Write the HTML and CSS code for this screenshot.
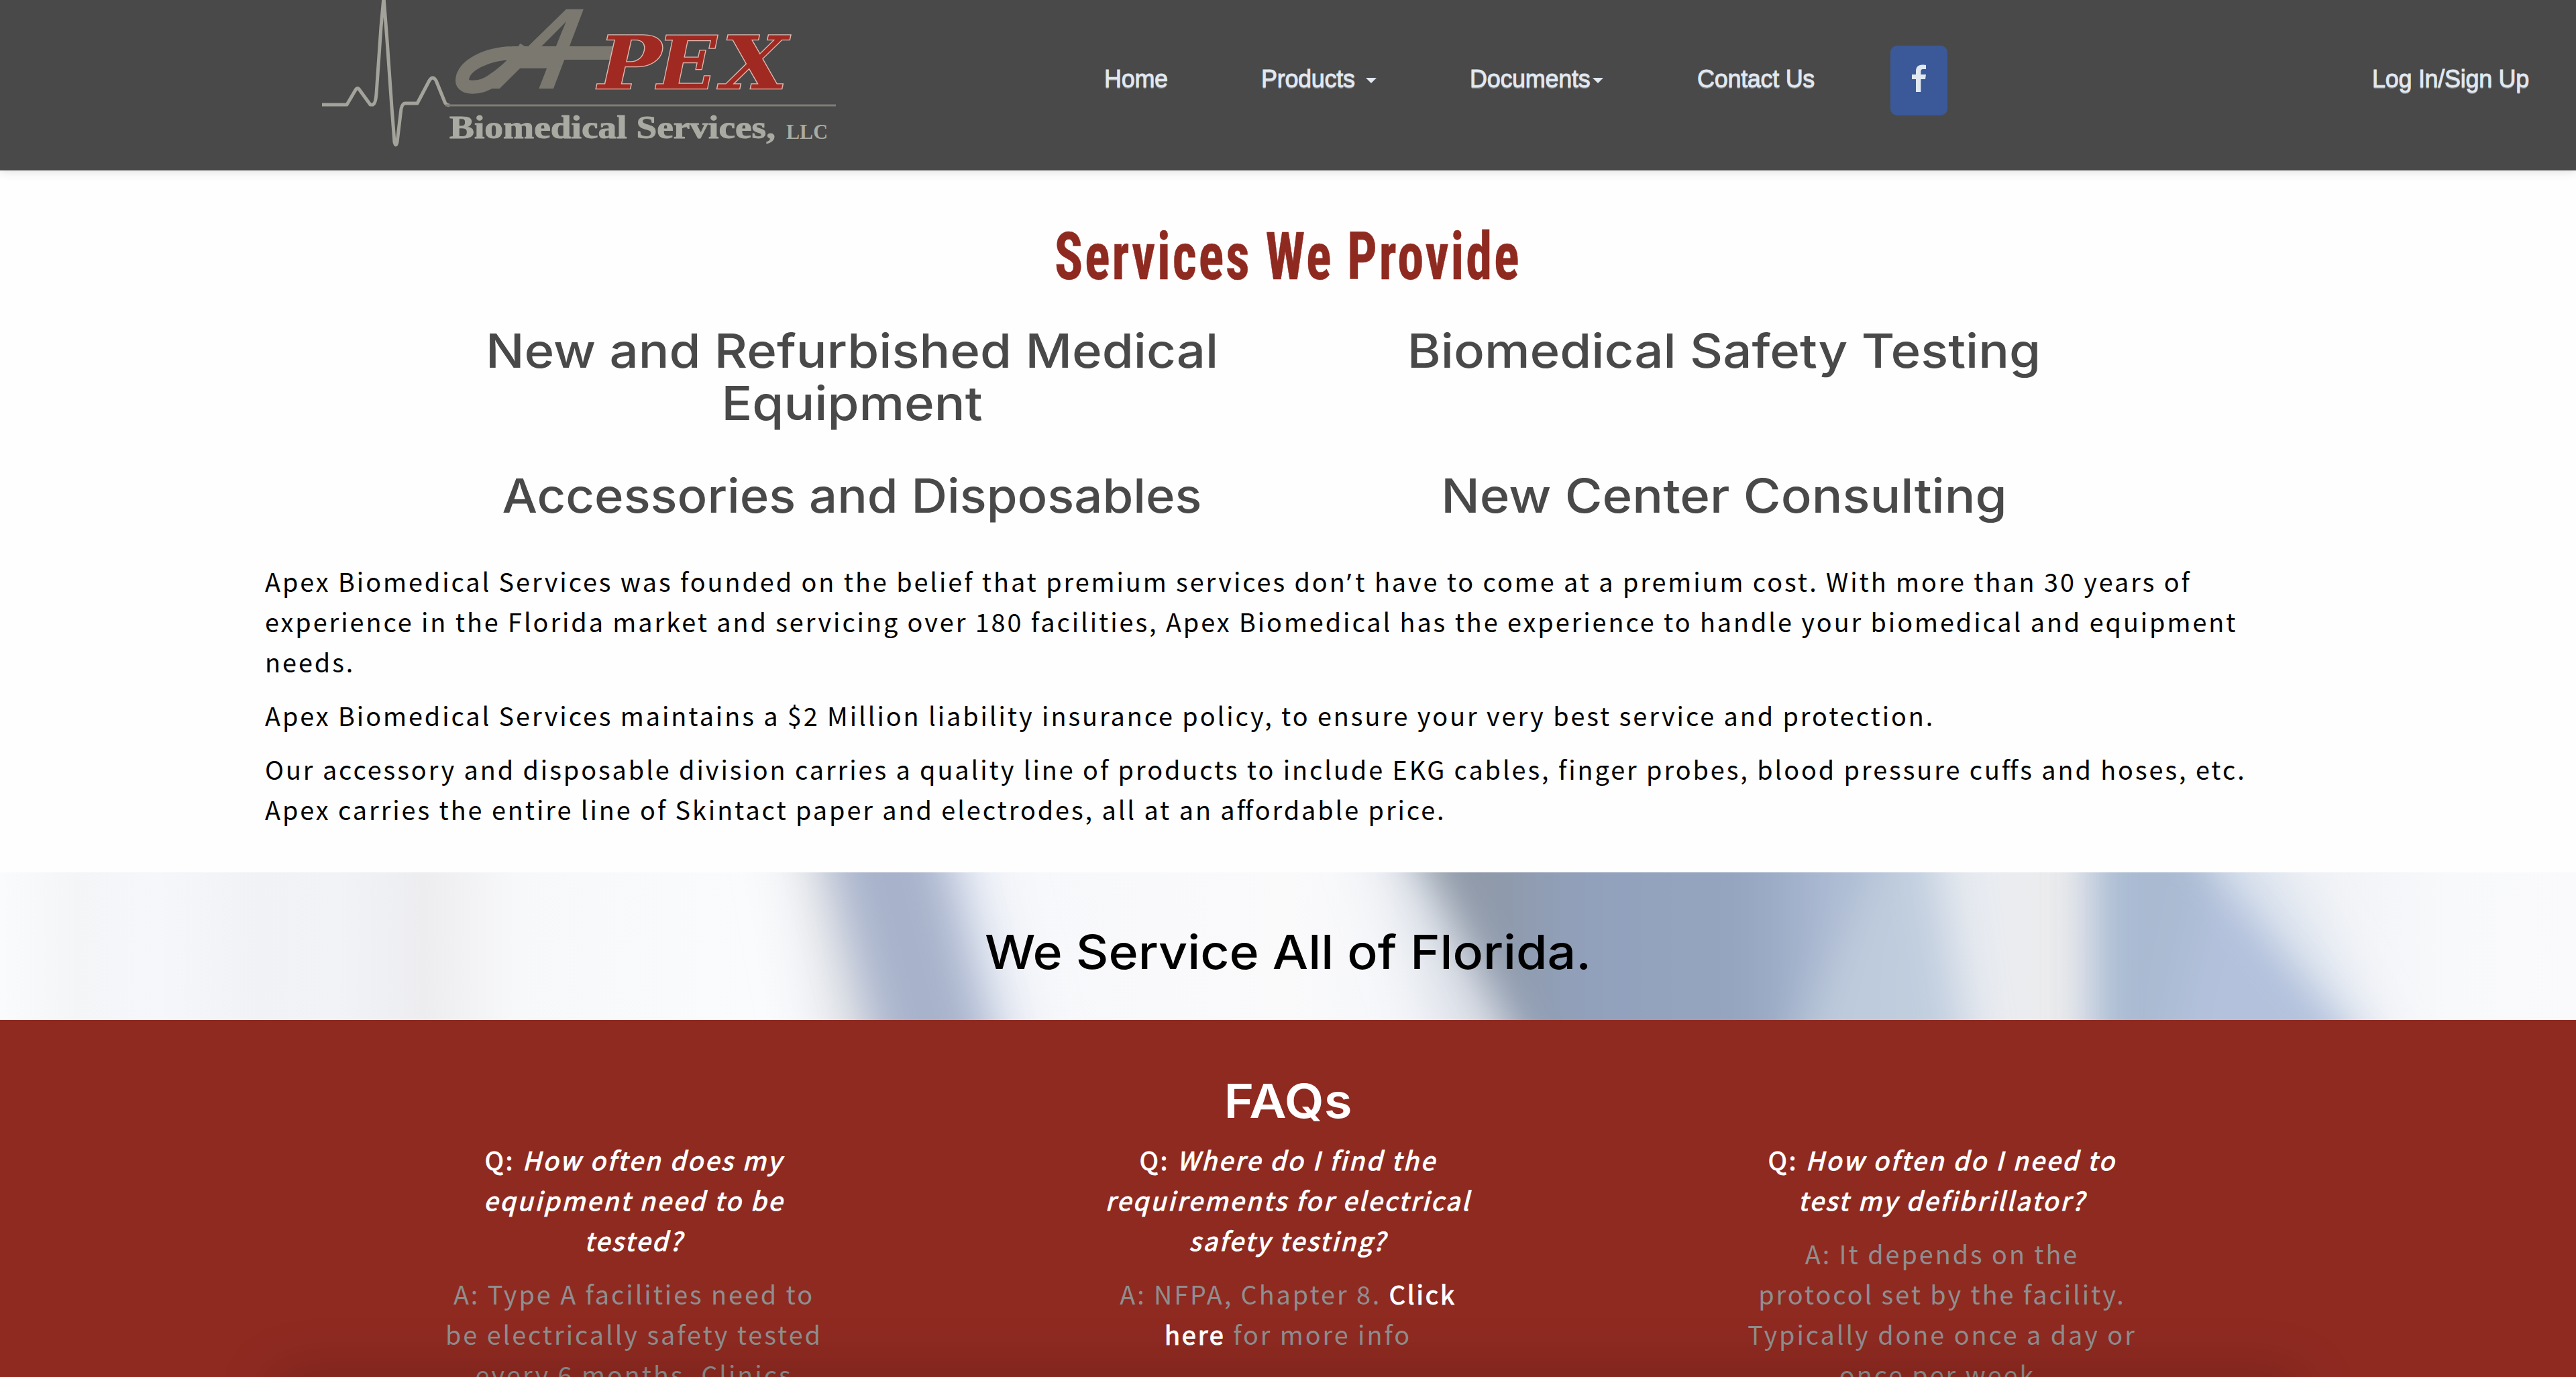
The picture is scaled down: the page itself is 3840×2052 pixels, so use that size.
FILE: index.html
```html
<!DOCTYPE html>
<html lang="en">
<head>
<meta charset="utf-8">
<title>Apex Biomedical Services, LLC</title>
<link rel="stylesheet" href="styles.css">
</head>
<body>
<header class="header">
  <a class="logo" href="#">
    <svg width="770" height="254" viewBox="480 0 770 254" role="img" aria-label="Apex Biomedical Services, LLC">
      <path class="pulse" d="M480 156H517L530 134Q533 129 536 134L552 156H556Q560 154 561 140L568 40L572 -4L577 60L584 160L588 212Q590 220 592 212L598 162Q600 154 604 154H622L640 120Q645 112 650 120L663 152Q664 156 670 157"/>
      <path class="rule" d="M664 157H1246"/>
      <path class="swash" d="M930 79H768C725 79 689 98 689 120C689 133 716 133 734 120C752 108 770 93 784 70"/>
      <text class="logo-a" transform="translate(719 132) skewX(-35)" textLength="110" lengthAdjust="spacingAndGlyphs">A</text>
      <text class="logo-pex" x="892" y="132" textLength="94" lengthAdjust="spacingAndGlyphs">P</text>
      <text class="logo-pex" x="980" y="132" textLength="88" lengthAdjust="spacingAndGlyphs">E</text>
      <text class="logo-pex" x="1076" y="132" textLength="98" lengthAdjust="spacingAndGlyphs">X</text>
      <text class="logo-name" x="670" y="206" textLength="486" lengthAdjust="spacingAndGlyphs">Biomedical Services,</text>
      <text class="logo-llc" x="1172" y="207" textLength="62" lengthAdjust="spacingAndGlyphs">LLC</text>
    </svg>
  </a>
  <nav class="nav">
    <a href="#">Home</a>
    <a href="#">Products <span class="caret caret-gap"></span></a>
    <a href="#">Documents<span class="caret"></span></a>
    <a href="#">Contact Us</a>
    <a class="facebook" href="#" aria-label="Facebook">
      <svg width="24" height="42" viewBox="0 0 24 42"><path d="M22 1v6h-4c-3 0-3.600 1.500-3.600 4v4H22l-1 7h-6.600v19H7V22H1v-7h6v-5C7 4 10.500 .5 16.500 .5c2.500 0 4.500 .2 5.500 .5z"/></svg>
    </a>
  </nav>
  <a class="login" href="#">Log In/Sign Up</a>
</header>

<main class="services">
  <h2 class="services-title"><span>Services We Provide</span></h2>
  <div class="service-grid">
    <h3 class="display">New and Refurbished Medical<br>Equipment</h3>
    <h3 class="display">Biomedical Safety Testing</h3>
    <h3 class="display tight">Accessories and Disposables</h3>
    <h3 class="display">New Center Consulting</h3>
  </div>
  <div class="about">
    <p>Apex Biomedical Services was founded on the belief that premium services don<span class="apos">’</span>t have to come at a premium cost. With more than 30 years of<br>experience in the Florida market and servicing over 180 facilities, Apex Biomedical has the experience to handle your biomedical and equipment<br>needs.</p>
    <p>Apex Biomedical Services maintains a $2 Million liability insurance policy, to ensure your very best service and protection.</p>
    <p>Our accessory and disposable division carries a quality line of products to include EKG cables, finger probes, blood pressure cu<span class="lig">f</span>fs and hoses, etc.<br>Apex carries the entire line of Skintact paper and electrodes, all at an a<span class="lig">f</span>fordable price.</p>
  </div>
</main>

<section class="banner">
  <svg class="banner-art" viewBox="0 0 3840 220" preserveAspectRatio="none" aria-hidden="true">
    <defs>
      <linearGradient id="base" x1="0" x2="1" y1="0" y2="0">
        <stop offset="0" stop-color="#fafbfc"/><stop offset=".03" stop-color="#f3f5f7"/>
        <stop offset=".06" stop-color="#f5f7fb"/><stop offset=".1" stop-color="#f1f2f5"/>
        <stop offset=".13" stop-color="#f1f3f7"/><stop offset=".165" stop-color="#ededf0"/>
        <stop offset=".2" stop-color="#f7f8fa"/><stop offset=".29" stop-color="#fafbfd"/>
        <stop offset=".4" stop-color="#f7f8fb"/><stop offset=".5" stop-color="#fafafb"/>
        <stop offset=".56" stop-color="#f3f5f9"/><stop offset=".77" stop-color="#e9ecf1"/>
        <stop offset=".8" stop-color="#ececed"/><stop offset=".9" stop-color="#f0f2f6"/>
        <stop offset=".95" stop-color="#f8f9fb"/><stop offset="1" stop-color="#fafafc"/>
      </linearGradient>
      <linearGradient id="fold" x1="0" x2="1" y1="0" y2="0">
        <stop offset="0" stop-color="#8f99a5"/><stop offset=".14" stop-color="#8f9aab"/>
        <stop offset=".28" stop-color="#91a0bb"/><stop offset=".6" stop-color="#95a5c0"/>
        <stop offset=".74" stop-color="#abb9d2"/><stop offset="1" stop-color="#b9c8de"/>
      </linearGradient>
      <filter id="soft" x="-50%" width="200%" y="0" height="100%"><feGaussianBlur stdDeviation="33 0"/></filter>
      <filter id="softer" x="-50%" width="200%" y="0" height="100%"><feGaussianBlur stdDeviation="46 0"/></filter>
    </defs>
    <rect width="3840" height="220" fill="url(#base)"/>
    <g filter="url(#softer)">
      <path fill="#d9e0ee" d="M1230 0H1455L1510 220H1300z"/>
      <path fill="#dbdee3" d="M1195 0H1300L1350 220H1235z"/>
      <path fill="#d8dde5" d="M2075 0H2250L2350 220H2150z"/>
      <path fill="#d5dfec" d="M3150 0H3390L3520 220H3150z"/>
    </g>
    <g filter="url(#soft)">
      <path fill="#a7b2cb" d="M1245 0H1410L1465 220H1300z"/>
      <path fill="url(#fold)" d="M2130 0H2880L2925 220H2245z"/>
      <path fill="#c6d2e1" d="M2790 0L2900 0L2930 220H2690z" opacity=".65"/>
      <path fill="#a9bad1" d="M3120 0H3300L3480 220H3120z"/>
      <path fill="#b3c1dc" d="M3290 0H3300L3480 220H3240z"/>
    </g>
  </svg>
  <h2 class="display banner-title">We Service All of Florida.</h2>
</section>

<section class="faqs">
  <h2 class="display faqs-title">FAQs</h2>
  <div class="faq-grid">
    <article>
      <p class="question">Q: <em>How often does my<br>equipment need to be<br>tested?</em></p>
      <p class="answer">A: Type A facilities need to<br>be electrically safety tested<br>every 6 months. Clinics</p>
    </article>
    <article>
      <p class="question">Q: <em>Where do I find the<br>requirements for electrical<br>safety testing?</em></p>
      <p class="answer">A: NFPA, Chapter 8. <a href="#">Click<br>here</a> for more info</p>
    </article>
    <article>
      <p class="question">Q: <em>How often do I need to<br>test my defibrillator?</em></p>
      <p class="answer">A: It depends on the<br>protocol set by the facility.<br>Typically done once a day or<br>once per week.</p>
    </article>
  </div>
</section>
<div class="edge-shadow"></div>
</body>
</html>
```
FILE: styles.css
```css
* { box-sizing: border-box; margin: 0; padding: 0; }
html { overflow: hidden; }
body {
  position: relative;
  height: 2052px;
  overflow: hidden;
  background: #fefefe;
  color: #000;
  font: 400 37.8px/60px "Noto Sans CJK SC", "Open Sans", sans-serif;
  letter-spacing: 2.94px;
}
a { color: inherit; text-decoration: none; }

/* Header */
.header {
  position: relative;
  display: flex;
  align-items: flex-start;
  height: 254px;
  padding: 0 70px 0 480px;
  background: #494949;
  color: #e1e8f0;
  font: 400 36px/42px "Liberation Sans", Arial, sans-serif;
  letter-spacing: -.3px;
  text-shadow: 0 2px 0 rgba(225, 232, 240, .35);
  -webkit-text-stroke: .9px #e1e8f0;
  box-shadow: 0 2px 14px rgba(0, 0, 0, .12);
}
.logo { display: block; width: 770px; height: 254px; }
.logo svg { display: block; text-shadow: none; letter-spacing: 0; -webkit-text-stroke: 0; }
.pulse { fill: none; stroke: #a3a39b; stroke-width: 5; stroke-linejoin: round; }
.rule { stroke: #7f7d75; stroke-width: 3; }
.swash { fill: none; stroke: #7b7870; stroke-width: 20; }
.logo-a { fill: #7b7870; font: 700 172px "Liberation Sans", sans-serif; }
.logo-pex { fill: #a02a21; stroke: #dcb8b0; stroke-width: 2.5; paint-order: stroke; font: italic 700 108px "DejaVu Serif", serif; }
.logo-name { fill: #a9aba2; stroke: #a9aba2; stroke-width: 1; font: 700 49px "Liberation Serif", serif; }
.logo-llc { fill: #a9aba2; font: 700 32px "Liberation Serif", serif; }

.nav {
  display: grid;
  grid-template-columns: 234px 311px 339px 288px 85px;
  align-items: center;
  height: 104px;
  margin: 68px 0 0 396px;
  white-space: nowrap;
}
.nav > a { padding-bottom: 5px; }
.nav > .facebook {
  display: flex;
  justify-content: center;
  width: 85px;
  height: 104px;
  padding: 28px 0 0;
  border-radius: 10px;
  background: #3b5998;
}
.facebook path { fill: #e1e8f0; stroke: none; }
.caret {
  display: inline-block;
  margin-left: 4px;
  border: 8px solid transparent;
  border-top-color: #e1e8f0;
  border-bottom: 0;
  vertical-align: 6px;
}
.caret-gap { margin-left: 7px; }
.login { margin: 97px 0 0 auto; white-space: nowrap; }

/* Services */
.services { display: flex; flex-direction: column; align-items: center; padding: 75px 0 64px; }
.services-title {
  height: 108px;
  color: #8f2a21;
  font: 700 98px/108px "Roboto Condensed", Roboto, sans-serif;
  letter-spacing: 3.600px;
  white-space: nowrap;
}
.services-title span { display: inline-block; transform: scaleX(.8); -webkit-text-stroke: .5px #8f2a21; }
.service-grid {
  display: grid;
  grid-template-columns: 1300px 1300px;
  row-gap: 60px;
  margin: 47px 0 58px;
  color: #494949;
  text-align: center;
}
.display {
  font: 500 70px/78px Inter, "Open Sans", sans-serif;
  letter-spacing: 0;
  text-align: center;
  transform: scaleX(1.088);
}
.display.tight { transform: scaleX(1.06); }
.about { width: 3050px; white-space: nowrap; }
.about p + p { margin-top: 20px; }
.apos { margin-right: 3px; font-family: "Noto Sans", sans-serif; line-height: 1; }
.lig { letter-spacing: 0; }

/* Banner */
.banner { position: relative; height: 220px; padding-top: 80px; overflow: hidden; }
.banner-art { position: absolute; inset: 0; width: 100%; height: 100%; }
.banner-title { position: relative; transform: scaleX(1.075); }

/* FAQs */
.faqs { height: 532px; padding-top: 82px; overflow: hidden; background: #8f2a21; color: #fff; text-align: center; }
.faqs-title { font-weight: 600; }
.faq-grid { display: grid; grid-template-columns: repeat(3, 975px); justify-content: center; margin-top: 18px; }
.question { -webkit-text-stroke: 1.1px #fff; }
.answer { margin-top: 20px; color: #8f8f8f; }
.answer a { color: #fff; -webkit-text-stroke: 1.1px #fff; }

.edge-shadow {
  position: absolute;
  top: 2062px;
  left: 420px;
  right: 420px;
  height: 60px;
  box-shadow: 0 0 90px 10px rgba(0, 0, 0, .2);
}
```
